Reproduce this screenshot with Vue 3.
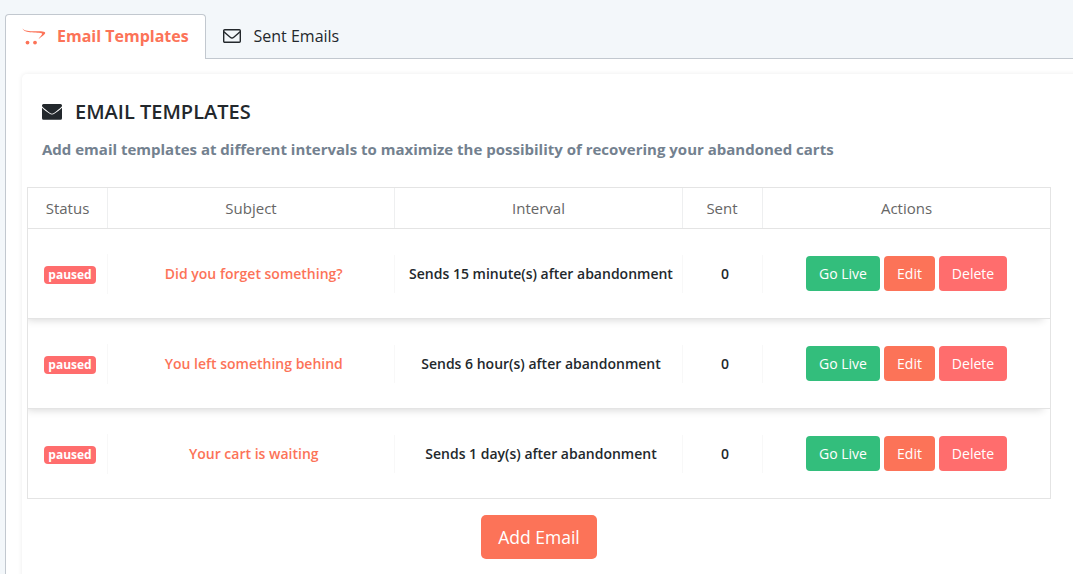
<script setup>
const columns = ['Status', 'Subject', 'Interval', 'Sent', 'Actions']
const rows = [
  { subject: 'Did you forget something?', interval: 'Sends 15 minute(s) after abandonment' },
  { subject: 'You left something behind', interval: 'Sends 6 hour(s) after abandonment' },
  { subject: 'Your cart is waiting', interval: 'Sends 1 day(s) after abandonment' },
]
</script>

<template>
  <div class="page">
    <nav class="tabs">
      <div class="tab active">
        <svg class="cart" viewBox="0 0 24 17" width="24" height="17">
          <path d="M.3 .2C2.500 3 7 3.200 13 3.200c6 0 10.500 .1 10.200 1.700-.3 1.700-3.500 3.500-6.700 6.100C18.500 8 20.700 6.400 20 5.500 19.200 4.500 13 4.900 8 4.200 3.500 3.600 1.200 2.500 .3 .2z" />
          <circle cx="5.500" cy="14.600" r="1.900" /><circle cx="13" cy="14.600" r="1.900" />
        </svg>
        <span>Email Templates</span>
      </div>
      <div class="tab">
        <svg class="outline" viewBox="0 0 18 14" width="18" height="14">
          <rect x=".7" y=".7" width="16.600" height="12.600" rx="1" />
          <path d="M1 2.800C3 5 5.500 6.600 7.300 8.300q1.700 1.400 3.400 0C12.500 6.600 15 5 17 2.800" />
        </svg>
        <span>Sent Emails</span>
      </div>
    </nav>
    <main class="panel">
      <section class="card">
        <h1>
          <svg viewBox="0 0 20 16" width="20" height="16">
            <path d="M1.500 0h17A1.500 1.500 0 0 1 20 1.500v.7C17.500 5 14.800 6.800 12 8.900q-2 1.500-4 0C5.200 6.800 2.500 5 0 2.200v-.7A1.500 1.500 0 0 1 1.500 0z" />
            <path d="M0 3.700C2.500 6.100 5 7.700 7.400 9.600q2.600 1.900 5.200 0C15 7.700 17.500 6.100 20 3.700v10.600a1.500 1.500 0 0 1-1.500 1.500h-17A1.500 1.500 0 0 1 0 14.300z" />
          </svg>
          <span>EMAIL TEMPLATES</span>
        </h1>
        <p class="lead">Add email templates at different intervals to maximize the possibility of recovering your abandoned carts</p>
        <div class="table">
          <div class="row head">
            <div v-for="c in columns" :key="c" class="th">{{ c }}</div>
          </div>
          <div v-for="r in rows" :key="r.subject" class="row item">
            <div class="td status"><span class="badge">paused</span></div>
            <div class="td subject">{{ r.subject }}</div>
            <div class="td interval">{{ r.interval }}</div>
            <div class="td sent">0</div>
            <div class="td actions">
              <button class="btn live">Go Live</button>
              <button class="btn edit">Edit</button>
              <button class="btn delete">Delete</button>
            </div>
          </div>
        </div>
        <button class="btn add">Add Email</button>
      </section>
    </main>
  </div>
</template>

<style>
body { margin: 0; overflow: hidden; }
</style>

<style scoped>
* { box-sizing: border-box; }
.page {
  height: 574px;
  overflow: hidden;
  padding: 14px 0 0 5px;
  background: #f3f7fa;
  color: #23282c;
  font-family: "Open Sans", "Noto Sans", sans-serif;
  font-size: 14px;
}
.tabs { display: flex; height: 45px; position: relative; z-index: 1; }
.tab {
  display: flex;
  align-items: center;
  height: 45px;
  padding: 0 16px 2px;
  border: 1px solid transparent;
  border-bottom: 0;
  font-size: 16px;
  white-space: nowrap;
}
.tab.active {
  width: 201px;
  background: #fff;
  border-color: #c2c8cf;
  border-radius: 4px 4px 0 0;
  color: #fc7358;
  font-weight: 700;
}
.cart { fill: #fc7358; margin-right: 11px; }
.outline { fill: none; stroke: #23282c; stroke-width: 1.400; margin-right: 12.500px; }
.panel {
  height: 530px;
  margin-top: -1px;
  padding: 15px 0 0 16px;
  background: #fff;
  border: 1px solid #c2c8cf;
  border-right: 0;
}
.card {
  width: 1060px;
  height: 560px;
  padding: 25px 0 0 5px;
  border-radius: 5px;
  box-shadow: 0 0 5px rgba(0, 0, 0, .08);
}
h1 {
  display: flex;
  align-items: center;
  height: 26px;
  margin: 0;
  padding-left: 15px;
  font-size: 20px;
  font-weight: 600;
  line-height: 26px;
}
h1 svg { fill: #23282c; margin-right: 13px; }
.lead {
  height: 20px;
  margin: 14px 0 0;
  padding-left: 15px;
  color: #73818f;
  font-size: 15px;
  font-weight: 700;
  line-height: 20px;
  white-space: nowrap;
}
.table { width: 1024px; margin-top: 28px; border: 1px solid #e4e4e4; border-top: 0; }
.row { display: grid; grid-template-columns: 80px 287px 288px 80px 287px; align-items: center; }
.head { height: 42px; border-top: 1px solid #e4e4e4; border-bottom: 1px solid #e4e4e4; }
.th {
  display: flex;
  align-items: center;
  justify-content: center;
  height: 40px;
  border-right: 1px solid #eeeff0;
  color: #666;
  font-size: 15px;
}
.th:nth-child(4) { padding-right: 1px; }
.th:last-child, .td:last-child { border-right: 0; }
.item { height: 90px; position: relative; }
.item:not(:last-child) { border-bottom: 1px solid #e4e4e4; box-shadow: -4px 4px 8px -3px rgba(0, 0, 0, .16); clip-path: inset(0 0 -12px 0); }
.item:last-child { height: 89px; }
.td {
  display: flex;
  align-items: center;
  justify-content: center;
  height: 38px;
  border-right: 1px solid #f8f8f8;
  font-weight: 600;
  white-space: nowrap;
}
.status { height: 40px; padding: 2px 0 0 5px; }
.subject { color: #fc7358; padding-left: 5.500px; }
.interval { padding-left: 5px; }
.sent { padding-left: 5px; }
.badge {
  height: 18px;
  padding: 0 4px;
  border-radius: 4px;
  background: #ff6d6d;
  color: #fff;
  font-size: 12px;
  font-weight: 700;
  line-height: 17px;
}
.actions { gap: 4px; }
.btn {
  height: 35px;
  padding: 0;
  border: 0;
  border-radius: 4px;
  color: #fff;
  font-family: inherit;
  font-size: 14px;
}
.live { width: 74px; background: #33be7c; }
.edit { width: 51px; background: #fc7358; }
.delete { width: 68px; background: #ff6d6d; }
.add {
  display: block;
  width: 116px;
  height: 44px;
  margin: 16px 0 0 454px;
  border-radius: 5px;
  background: #fc7358;
  font-size: 17.500px;
}
</style>
